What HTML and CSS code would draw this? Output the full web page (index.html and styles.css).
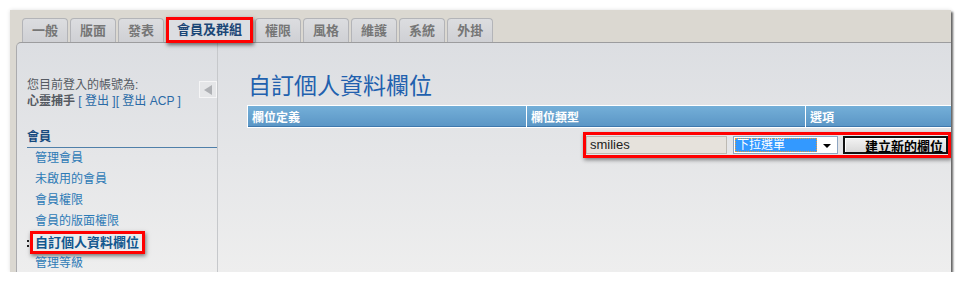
FILE: index.html
```html
<!DOCTYPE html>
<html lang="zh-Hant">
<head>
<meta charset="utf-8">
<title>自訂個人資料欄位</title>
<link rel="stylesheet" href="styles.css">
</head>
<body>
<div class="frame">
  <div class="tabs">
    <span class="tab">一般</span>
    <span class="tab">版面</span>
    <span class="tab">發表</span>
    <span class="tab active">會員及群組</span>
    <span class="tab">權限</span>
    <span class="tab">風格</span>
    <span class="tab">維護</span>
    <span class="tab">系統</span>
    <span class="tab">外掛</span>
  </div>
  <div class="panel">
    <aside class="sidebar">
      <div class="login">
        <div class="login-text">
          <div class="login-line">您目前登入的帳號為:</div>
          <div class="login-line"><b class="user">心靈捕手</b> <a class="link">[ 登出 ]</a><a class="link">[ 登出 ACP ]</a></div>
        </div>
        <span class="toggle"><span class="tri"></span></span>
      </div>
      <div class="menu-head">會員</div>
      <ul class="menu">
        <li class="item">管理會員</li>
        <li class="item">未啟用的會員</li>
        <li class="item">會員權限</li>
        <li class="item">會員的版面權限</li>
        <li class="item current"><span class="bullet"></span><span class="hl">自訂個人資料欄位</span></li>
        <li class="item">管理等級</li>
      </ul>
    </aside>
    <main class="main">
      <h1 class="title">自訂個人資料欄位</h1>
      <table class="grid">
        <thead>
          <tr><th class="c1">欄位定義</th><th class="c2">欄位類型</th><th class="c3">選項</th></tr>
        </thead>
      </table>
      <div class="form-row">
        <div class="form-box">
          <span class="input">smilies</span>
          <span class="select"><span class="sel-text">下拉選單</span><span class="sel-arrow"><span class="caret"></span></span></span>
          <span class="button">建立新的欄位</span>
        </div>
      </div>
    </main>
  </div>
</div>
</body>
</html>
```

FILE: styles.css
```css
* { box-sizing: border-box; }
html, body { margin: 0; padding: 0; background: #ffffff; }
body {
  padding: 10px 0 0 10px;
  font-family: "Liberation Sans", "Noto Sans CJK TC", sans-serif;
  font-size: 12px;
}
.frame {
  width: 941px;
  height: 262px;
  background: #dbd8d1;
  padding: 8px 0 0 6px;
  overflow: hidden;
  display: flex;
  flex-direction: column;
  box-shadow: 2px 2px 2px rgba(0,0,0,0.6), 0 0 4px rgba(0,0,0,0.12);
}
.tabs {
  display: flex;
  align-items: flex-end;
  gap: 2px;
  height: 24px;
  padding-left: 6px;
  flex: none;
}
.tab {
  height: 24px;
  padding: 0 9px;
  border: 1px solid #b3b4b8;
  border-bottom: none;
  border-radius: 4px 4px 0 0;
  background: linear-gradient(#dcdde0, #cfd0d4);
  color: #767676;
  font-weight: bold;
  font-size: 13px;
  line-height: 23px;
  white-space: nowrap;
}
.tab.active {
  position: relative;
  z-index: 2;
  height: 26px;
  margin-bottom: -1px;
  padding: 0 8px;
  border: 3px solid #ff0000;
  border-radius: 0;
  background: #dcdee2;
  color: #1b4676;
  line-height: 20px;
  box-shadow: 1px 2px 4px rgba(0,0,0,0.55);
}
.panel {
  flex: 1;
  display: flex;
  border-top: 1px solid #9c9c9e;
  border-left: 1px solid #ababae;
  border-radius: 5px 0 0 0;
  background: linear-gradient(#dcdee2, #eeeeee);
  min-height: 0;
}
.sidebar {
  width: 201px;
  flex: none;
  border-right: 1px solid #c6c8cb;
  padding: 34px 0 0 10px;
}
.login {
  display: flex;
  justify-content: space-between;
  align-items: flex-start;
}
.login-line {
  line-height: 16px;
  color: #555a62;
  white-space: nowrap;
}
.user { color: #555a62; }
.link { color: #2a6aa6; }
.toggle {
  width: 18px;
  height: 17px;
  margin-top: 4px;
  background: #e5e6e8;
  border: 1px solid #f5f5f6;
  display: flex;
  align-items: center;
  justify-content: center;
}
.tri {
  width: 0;
  height: 0;
  border-top: 5px solid transparent;
  border-bottom: 5px solid transparent;
  border-right: 8px solid #aeb0b4;
}
.menu-head {
  margin-top: 20px;
  color: #154a7e;
  font-weight: bold;
  line-height: 16px;
  padding-bottom: 2px;
  border-bottom: 1px solid #4f7fa9;
}
.menu {
  list-style: none;
  margin: 0;
  padding: 0;
}
.item {
  height: 21px;
  line-height: 21px;
  padding-left: 8px;
  color: #2d7ab6;
  white-space: nowrap;
}
.item.current {
  display: flex;
  align-items: center;
  padding-left: 0;
}
.bullet {
  width: 2px;
  height: 7px;
  border-top: 2px solid #222;
  border-bottom: 2px solid #222;
  margin: 2px 1px 0 0;
}
.hl {
  height: 23px;
  line-height: 17px;
  border: 3px solid #ff0000;
  padding: 0 3px 0 2px;
  font-weight: bold;
  font-size: 13px;
  color: #11578f;
  box-shadow: 1px 2px 4px rgba(0,0,0,0.5);
}
.main {
  flex: 1;
  min-width: 0;
  padding: 29px 0 0 29px;
}
.title {
  margin: 0 0 5px 1px;
  font-size: 23px;
  line-height: 28px;
  font-weight: normal;
  color: #2160ae;
  white-space: nowrap;
}
.grid {
  border-collapse: separate;
  border-spacing: 0;
  border: 1px solid #ffffff;
  width: 760px;
}
.grid th {
  height: 21px;
  padding: 0 0 0 4px;
  text-align: left;
  font-size: 12px;
  font-weight: bold;
  color: #ffffff;
  background: linear-gradient(#74afd8, #5a95c5);
  box-shadow: inset 0 -1px 0 #3f78ad;
  white-space: nowrap;
}
.grid .c1 { width: 279px; border-right: 1px solid #ffffff; }
.grid .c2 { width: 279px; border-right: 1px solid #ffffff; }
.form-row {
  margin-top: 4px;
  display: flex;
  justify-content: flex-end;
}
.form-box {
  display: flex;
  align-items: center;
  border: 3px solid #ff0000;
  padding: 1px 0;
  box-shadow: 1px 2px 4px rgba(0,0,0,0.45);
}
.input {
  width: 141px;
  height: 18px;
  background: #e6e2dc;
  border: 1px solid #bdb9b2;
  padding-left: 3px;
  font-size: 13px;
  line-height: 16px;
  color: #222;
}
.select {
  width: 105px;
  height: 18px;
  margin-left: 6px;
  background: #ffffff;
  border: 1px solid #8ea6c2;
  display: flex;
  padding: 1px;
}
.sel-text {
  flex: 1;
  background: #3399ff;
  color: #ffffff;
  outline: 1px dotted #e89a3c;
  outline-offset: -1px;
  font-size: 12px;
  line-height: 14px;
  padding-left: 2px;
  white-space: nowrap;
}
.sel-arrow {
  width: 19px;
  display: flex;
  align-items: center;
  justify-content: center;
}
.caret {
  width: 0;
  height: 0;
  border-left: 4px solid transparent;
  border-right: 4px solid transparent;
  border-top: 4px solid #000;
  margin-top: 2px;
}
.button {
  width: 105px;
  height: 18px;
  margin-left: 5px;
  border: 2px solid #111;
  background: linear-gradient(#f3f3f3, #d9d9d9);
  box-shadow: inset 1px 1px 0 #ffffff;
  display: flex;
  align-items: center;
  justify-content: flex-end;
  padding-right: 3px;
  font-size: 13px;
  font-weight: bold;
  color: #000;
  white-space: nowrap;
}
```
